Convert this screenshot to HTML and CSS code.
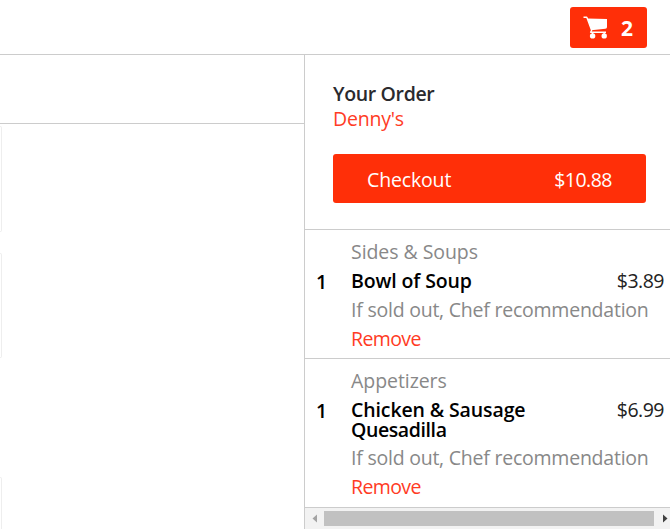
FILE: index.html
```html
<!DOCTYPE html>
<html lang="en">
<head>
<meta charset="utf-8">
<title>Your Order</title>
<link rel="stylesheet" href="styles.css">
</head>
<body>
<header class="topbar">
  <button class="cart">
    <svg class="cart-icon" viewBox="0 0 24 23" width="24" height="23">
      <path d="M0.5 1.2 H3.8 L8.6 14.2 L7.6 16.2 H23" fill="none" stroke="#fff" stroke-width="1.4" stroke-linejoin="round"/>
      <path d="M4.6 2.4 L24 3.1 V11 Q24 12.6 22.4 12.8 L8.4 14.2 Z" fill="#fff"/>
      <circle cx="9.6" cy="19.9" r="2.7" fill="#fff"/>
      <circle cx="21.2" cy="19.9" r="2.7" fill="#fff"/>
      <path d="M9.6 17 V19 M21.2 17 V19" stroke="#fff" stroke-width="1.2"/>
    </svg>
    <span class="cart-count">2</span>
  </button>
</header>
<main class="content">
  <section class="menu">
    <div class="menu-bar"></div>
    <div class="menu-card"></div>
    <div class="menu-card second"></div>
    <div class="menu-card third"></div>
  </section>
  <aside class="order">
    <div class="summary">
      <h2 class="title">Your Order</h2>
      <a class="restaurant">Denny's</a>
      <button class="checkout"><span class="checkout-label">Checkout</span><span class="total">$10.88</span></button>
    </div>
    <article class="item">
      <span class="qty">1</span>
      <div class="details">
        <div class="category">Sides &amp; Soups</div>
        <div class="row"><h3 class="name">Bowl of Soup</h3><span class="price">$3.89</span></div>
        <div class="note">If sold out, Chef recommendation</div>
        <a class="remove">Remove</a>
      </div>
    </article>
    <article class="item tall">
      <span class="qty">1</span>
      <div class="details">
        <div class="category">Appetizers</div>
        <div class="row"><h3 class="name">Chicken &amp; Sausage<br><span class="tight">Quesadilla</span></h3><span class="price">$6.99</span></div>
        <div class="note">If sold out, Chef recommendation</div>
        <a class="remove">Remove</a>
      </div>
    </article>
    <div class="scrollbar">
      <svg width="20" height="15" viewBox="0 0 20 15"><path d="M12 3.5 V11.5 L7.5 7.5 Z" fill="#a3a3a3"/></svg>
      <div class="thumb"></div>
      <svg width="16" height="15" viewBox="0 0 16 15"><path d="M9 3.5 V11.5 L13.5 7.5 Z" fill="#404040"/></svg>
    </div>
  </aside>
</main>
</body>
</html>
```
FILE: styles.css
```css
* { box-sizing: border-box; }
body {
  margin: 0;
  height: 529px;
  overflow: hidden;
  background: #fff;
  color: #222;
  font: 19.5px/29px "Open Sans", "Noto Sans", sans-serif;
}
button { border: 0; font: inherit; color: #fff; background: #ff2f08; border-radius: 3px; }
h2, h3 { margin: 0; font-size: inherit; font-weight: 600; }
.topbar {
  height: 55px;
  padding: 7px 23px 0 0;
  border-bottom: 1px solid #ccc;
  display: flex;
  justify-content: flex-end;
  align-items: flex-start;
}
.cart {
  width: 77px;
  height: 41px;
  padding: 0 14px 0 13px;
  display: flex;
  align-items: center;
  justify-content: space-between;
}
.cart-count { padding-top: 1px; font-size: 21px; font-weight: 700; line-height: 40px; }
.content { display: grid; grid-template-columns: 304px 366px; height: 474px; }
.menu { overflow: hidden; }
.menu-bar { height: 69px; border-bottom: 1px solid #ccc; }
.menu-card {
  width: 2px;
  height: 106px;
  margin-top: 2px;
  border: 1px solid #eee;
  border-left: 0;
  border-radius: 0 3px 3px 0;
}
.menu-card.second { margin-top: 21px; height: 105px; }
.menu-card.third { margin-top: 119px; }
.order { border-left: 1px solid #ccc; overflow: hidden; }
.summary { height: 175px; padding: 25px 24px 0 28px; border-bottom: 1px solid #ccc; }
.title { line-height: 28px; color: #2a2a2e; letter-spacing: -0.35px; }
.restaurant { display: block; line-height: 24px; margin-top: -1px; color: #ff3b24; letter-spacing: -0.2px; }
.checkout {
  width: 313px;
  height: 49px;
  margin-top: 23px;
  padding: 1px 34px 0 34px;
  display: flex;
  align-items: center;
  justify-content: space-between;
}
.checkout-label { letter-spacing: -0.15px; }
.total { letter-spacing: -0.5px; }
.item { display: flex; height: 129px; padding: 7px 6px 0 11px; border-bottom: 1px solid #ccc; }
.item.tall { height: 149px; }
.qty { width: 35px; padding-top: 30px; font-weight: 600; color: #000; }
.details { flex: 1; }
.category, .note { color: #888; white-space: nowrap; letter-spacing: -0.06px; }
.note { letter-spacing: -0.23px; }
.row { display: flex; justify-content: space-between; }
.price { letter-spacing: -0.5px; }
.name { color: #000; line-height: 20px; padding: 5px 0 3px; letter-spacing: -0.12px; }
.tight { letter-spacing: -0.4px; }
.remove { display: block; color: #ff3b24; letter-spacing: -0.6px; }
.scrollbar {
  height: 21px;
  padding-top: 3px;
  display: flex;
  background: #f2f2f2;
}
.thumb { width: 330px; height: 15px; margin-left: -1px; background: #c1c1c1; }
```
